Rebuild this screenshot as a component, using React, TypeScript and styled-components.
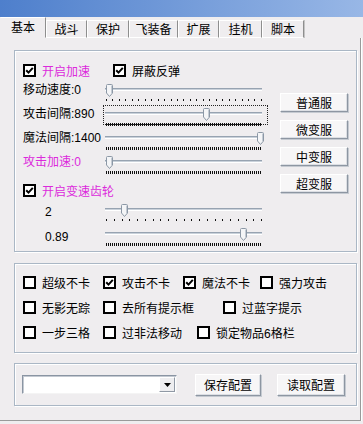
import React from "react";
import styled, { createGlobalStyle } from "styled-components";

const GlobalStyle = createGlobalStyle`
  html, body {
    margin: 0;
    padding: 0;
  }
  body {
    width: 363px;
    height: 424px;
    overflow: hidden;
    background: #efedef;
    font-family: "Liberation Sans", "Noto Sans CJK SC", sans-serif;
    font-size: 12px;
    color: #000;
  }
`;

const Window = styled.div`
  width: 363px;
  height: 424px;
  display: flex;
  flex-direction: column;
`;

const TitleStrip = styled.div`
  height: 17px;
  flex-shrink: 0;
  background: linear-gradient(to right, #4e7fcc, #98b7e6);
`;

const TabBar = styled.div`
  height: 21px;
  flex-shrink: 0;
  display: flex;
  align-items: flex-end;
`;

const Tab = styled.div<{ $selected?: boolean; $w: number }>`
  box-sizing: border-box;
  width: ${({ $w }) => $w}px;
  height: ${({ $selected }) => ($selected ? 21 : 18)}px;
  line-height: ${({ $selected }) => ($selected ? 18 : 16)}px;
  text-align: center;
  border-top: 1px solid #fff;
  border-left: 1px solid ${({ $selected }) => ($selected ? "transparent" : "#fff")};
  border-right: 1px solid #8e8e8e;
  border-bottom: 1px solid ${({ $selected }) => ($selected ? "transparent" : "#fff")};
  box-shadow: ${({ $selected }) => ($selected ? "none" : "1px 0 0 #c4c4c4")};
  font-family: "Noto Sans CJK SC", sans-serif;
  white-space: nowrap;
`;

const Panel = styled.div`
  box-sizing: border-box;
  width: 361px;
  height: 383px;
  padding: 12px 0 0 14px;
  border-right: 1px solid #9a9a9a;
  border-bottom: 1px solid #9a9a9a;
  box-shadow: 1px 0 0 #fff;
`;

const Group = styled.div<{ $h: number; $gap?: number }>`
  box-sizing: border-box;
  width: 343px;
  height: ${({ $h }) => $h}px;
  margin-top: ${({ $gap }) => $gap ?? 0}px;
  border: 1px solid #aab7c5;
  box-shadow: inset 1px 1px 0 #fff, 1px 1px 0 #fff;
`;

/* ---------- group 1 ---------- */

const SpeedGroup = styled(Group)`
  display: flex;
  padding: 10px 0 0 8px;
`;

const LeftColumn = styled.div`
  width: 245px;
  display: flex;
  flex-direction: column;
`;

const CheckRow = styled.div<{ $top?: number }>`
  display: flex;
  height: 18px;
  margin-top: ${({ $top }) => $top ?? 0}px;
  margin-bottom: 2px;
`;

const CheckItem = styled.label<{ $w?: number; $color?: string }>`
  display: flex;
  align-items: center;
  width: ${({ $w }) => ($w ? `${$w}px` : "auto")};
  flex-shrink: 0;
  color: ${({ $color }) => $color ?? "#000"};
  font-family: "Liberation Sans", "Noto Sans CJK SC", sans-serif;
  white-space: nowrap;
`;

const Box = styled.span`
  box-sizing: border-box;
  width: 13px;
  height: 13px;
  margin-right: 6px;
  border: 2px solid #000;
  background: #fff;
  display: flex;
  align-items: center;
  justify-content: center;
`;

const SliderRow = styled.div`
  display: flex;
  height: 24px;
`;

const SliderLabel = styled.div<{ $indent?: number; $drop?: number; $color?: string }>`
  width: 80px;
  box-sizing: border-box;
  padding-left: ${({ $indent }) => $indent ?? 0}px;
  padding-top: ${({ $drop }) => $drop ?? 0}px;
  line-height: 18px;
  color: ${({ $color }) => $color ?? "#000"};
  white-space: nowrap;
`;

const SliderArea = styled.div<{ $focused?: boolean }>`
  position: relative;
  width: 165px;
  height: 20px;
  outline: ${({ $focused }) => ($focused ? "1px dotted #222" : "none")};
  outline-offset: -1px;
`;

const Track = styled.div`
  box-sizing: border-box;
  width: 157px;
  height: 3px;
  margin: 7px 0 0 2px;
  border-top: 1px solid #97a3b1;
  border-bottom: 1px solid #fff;
  background: #c9d1da;
`;

const Thumb = styled.svg<{ $x: number }>`
  position: absolute;
  top: 3px;
  left: ${({ $x }) => $x}px;
`;

const Ticks = styled.div`
  display: flex;
  justify-content: space-between;
  width: 156px;
  margin: 8px 0 0 3px;
`;

const Tick = styled.span<{ $dense?: boolean }>`
  width: 1px;
  height: ${({ $dense }) => ($dense ? 3 : 2)}px;
  background: #111;
`;

const ButtonColumn = styled.div`
  display: flex;
  flex-direction: column;
  gap: 8px;
  margin-left: 12px;
  padding-top: 32px;
`;

const WinButton = styled.button<{ $w: number; $h?: number }>`
  box-sizing: border-box;
  width: ${({ $w }) => $w}px;
  height: ${({ $h }) => $h ?? 19}px;
  padding: 0;
  margin: 0;
  background: #f7f6f7;
  border: 1px solid;
  border-color: #fff #8d96a2 #8d96a2 #fff;
  box-shadow: 1px 1px 0 #c5cad1, inset -1px -1px 0 #dcdfe4;
  font-family: "Noto Sans CJK SC", sans-serif;
  font-size: 12px;
  color: #000;
  line-height: 16px;
`;

/* ---------- group 2 ---------- */

const OptionGroup = styled(Group)`
  padding: 6px 0 0 8px;
`;

const OptionRow = styled.div`
  display: flex;
  height: 25px;
  align-items: center;
`;

/* ---------- group 3 ---------- */

const ConfigGroup = styled(Group)`
  display: flex;
  align-items: center;
  padding-left: 7px;
`;

const Combo = styled.div`
  box-sizing: border-box;
  width: 155px;
  height: 19px;
  display: flex;
  justify-content: flex-end;
  align-items: stretch;
  background: #fff;
  border: 1px solid;
  border-color: #8a95a3 #f4f4f4 #f4f4f4 #8a95a3;
  box-shadow: inset 1px 1px 0 #c3c9d1;
  padding: 1px;
`;

const ComboButton = styled.div`
  box-sizing: border-box;
  width: 16px;
  display: flex;
  align-items: center;
  justify-content: center;
  background: #eeeef0;
  border: 1px solid;
  border-color: #fff #9099a5 #9099a5 #fff;
`;

const ConfigButton = styled(WinButton)<{ $left: number }>`
  margin-left: ${({ $left }) => $left}px;
`;

const MAGENTA = "#dc2adc";

const CheckMark = () => (
  <svg width="9" height="9" viewBox="0 0 9 9">
    <path d="M1.2 4.2 L3.5 6.6 L7.8 1.8" fill="none" stroke="#000" strokeWidth="2" />
  </svg>
);

const Check = ({
  label,
  checked,
  w,
  color,
}: {
  label: string;
  checked?: boolean;
  w?: number;
  color?: string;
}) => (
  <CheckItem $w={w} $color={color}>
    <Box>{checked && <CheckMark />}</Box>
    {label}
  </CheckItem>
);

const Slider = ({
  label,
  thumb,
  ticks,
  dense,
  focused,
  color,
  indent,
  drop,
}: {
  label: string;
  thumb: number;
  ticks: number;
  dense?: boolean;
  focused?: boolean;
  color?: string;
  indent?: number;
  drop?: number;
}) => (
  <SliderRow>
    <SliderLabel $color={color} $indent={indent} $drop={drop}>
      {label}
    </SliderLabel>
    <SliderArea $focused={focused}>
      <Track />
      <Thumb $x={thumb} width="7" height="13" viewBox="0 0 7 13">
        <path
          d="M0.5 1.5 Q0.5 0.5 1.5 0.5 H5.5 Q6.5 0.5 6.5 1.5 V9 L3.5 12.5 L0.5 9 Z"
          fill="#f4f5f7"
          stroke="#8c98a6"
        />
        <path d="M5.5 1.5 V9" stroke="#c4cbd4" />
      </Thumb>
      <Ticks>
        {Array.from({ length: ticks }).map((_, i) => (
          <Tick key={i} $dense={dense} />
        ))}
      </Ticks>
    </SliderArea>
  </SliderRow>
);

const tabs = [
  { name: "基本", w: 46 },
  { name: "战斗", w: 41 },
  { name: "保护", w: 42 },
  { name: "飞装备", w: 49 },
  { name: "扩展", w: 41 },
  { name: "挂机", w: 43 },
  { name: "脚本", w: 42 },
];

const App: React.FC = () => {
  return (
    <>
      <GlobalStyle />
      <Window>
        <TitleStrip />
        <TabBar>
          {tabs.map((t, i) => (
            <Tab key={t.name} $w={t.w} $selected={i === 0}>
              {t.name}
            </Tab>
          ))}
        </TabBar>

        <Panel>
          <SpeedGroup $h={202}>
            <LeftColumn>
              <CheckRow>
                <Check label="开启加速" checked w={90} color={MAGENTA} />
                <Check label="屏蔽反弹" checked />
              </CheckRow>
              <Slider label="移动速度:0" thumb={3} ticks={25} />
              <Slider label="攻击间隔:890" thumb={100} ticks={78} dense focused />
              <Slider label="魔法间隔:1400" thumb={154} ticks={78} dense />
              <Slider label="攻击加速:0" thumb={3} ticks={78} dense color={MAGENTA} />
              <CheckRow $top={4}>
                <Check label="开启变速齿轮" checked color={MAGENTA} />
              </CheckRow>
              <Slider label="2" thumb={18} ticks={21} indent={22} drop={2} />
              <Slider label="0.89" thumb={137} ticks={78} dense indent={22} drop={3} />
            </LeftColumn>
            <ButtonColumn>
              <WinButton $w={68}>普通服</WinButton>
              <WinButton $w={68}>微变服</WinButton>
              <WinButton $w={68}>中变服</WinButton>
              <WinButton $w={68}>超变服</WinButton>
            </ButtonColumn>
          </SpeedGroup>

          <OptionGroup $h={90} $gap={11}>
            <OptionRow>
              <Check label="超级不卡" w={80} />
              <Check label="攻击不卡" checked w={80} />
              <Check label="魔法不卡" checked w={77} />
              <Check label="强力攻击" />
            </OptionRow>
            <OptionRow>
              <Check label="无影无踪" w={80} />
              <Check label="去所有提示框" w={120} />
              <Check label="过蓝字提示" />
            </OptionRow>
            <OptionRow>
              <Check label="一步三格" w={80} />
              <Check label="过非法移动" w={94} />
              <Check label="锁定物品6格栏" />
            </OptionRow>
          </OptionGroup>

          <ConfigGroup $h={43} $gap={10}>
            <Combo>
              <ComboButton>
                <svg width="7" height="4" viewBox="0 0 7 4">
                  <path d="M0 0 H7 L3.5 4 Z" fill="#000" />
                </svg>
              </ComboButton>
            </Combo>
            <ConfigButton $w={66} $h={22} $left={18}>
              保存配置
            </ConfigButton>
            <ConfigButton $w={68} $h={22} $left={16}>
              读取配置
            </ConfigButton>
          </ConfigGroup>
        </Panel>
      </Window>
    </>
  );
};

export default App;
